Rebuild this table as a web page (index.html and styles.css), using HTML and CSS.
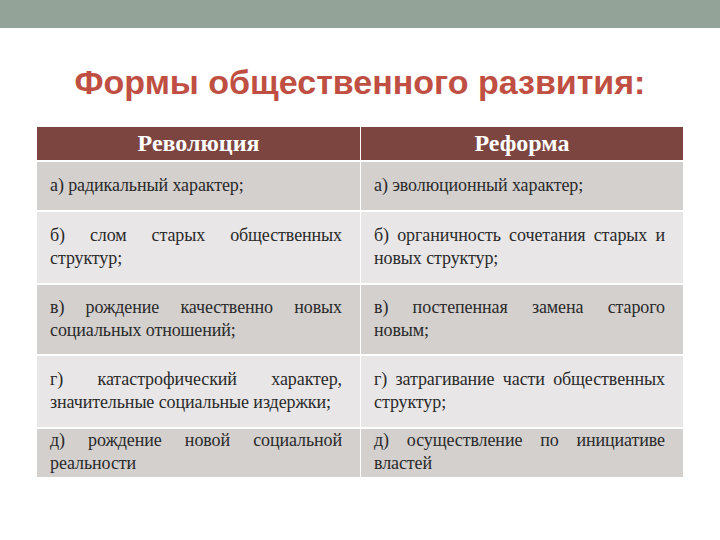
FILE: index.html
```html
<!DOCTYPE html>
<html lang="ru">
<head>
<meta charset="utf-8">
<title>slide</title>
<link rel="stylesheet" href="styles.css">
</head>
<body>
<div class="topbar"></div>
<div class="title">Формы общественного развития:</div>
<table class="forms">
  <colgroup><col class="c1"><col class="c2"></colgroup>
  <tr class="r0">
    <th class="head">Революция</th>
    <th class="head">Реформа</th>
  </tr>
  <tr class="r1 dark">
    <td>а) радикальный характер;</td>
    <td>а) эволюционный характер;</td>
  </tr>
  <tr class="r2 light">
    <td><span class="jl">б) слом старых общественных</span> структур;</td>
    <td><span class="jl">б) органичность сочетания старых и</span> новых структур;</td>
  </tr>
  <tr class="r3 dark">
    <td><span class="jl">в) рождение качественно новых</span> социальных отношений;</td>
    <td><span class="jl">в) постепенная замена старого</span> новым;</td>
  </tr>
  <tr class="r4 light">
    <td><span class="jl">г) катастрофический характер,</span> <span class="nw">значительные социальные издержки;</span></td>
    <td><span class="jl">г) затрагивание части общественных</span> структур;</td>
  </tr>
  <tr class="r5 dark">
    <td><span class="jl">д) рождение новой социальной</span> реальности</td>
    <td><span class="jl">д) осуществление по инициативе</span> властей</td>
  </tr>
</table>
</body>
</html>
```
FILE: styles.css
```css
body {
  margin: 0;
  background: #ffffff;
  font-family: "Liberation Serif", Tinos, "Times New Roman", serif;
}
.topbar {
  height: 28px;
  background: #94a397;
}
.title {
  margin: 34px 0 23px;
  font-family: "Liberation Sans", Arial, sans-serif;
  font-weight: bold;
  font-size: 34px;
  line-height: 40px;
  text-align: center;
  color: #bf4f42;
}
.forms {
  margin-left: 36px;
  border-collapse: separate;
  border-spacing: 1px 2px;
  table-layout: fixed;
  width: 648px;
}
.c1 { width: 323px; }
.c2 { width: 322px; }
.r0 { height: 33px; }
.r1 { height: 48px; }
.r2 { height: 71px; }
.r3 { height: 69px; }
.r4 { height: 71px; }
.r5 { height: 48px; }
.head {
  padding: 0;
  background: #7c4540;
  color: #ffffff;
  font-family: "Liberation Serif", Tinos, "Times New Roman", serif;
  font-weight: bold;
  font-size: 24px;
  text-align: center;
  vertical-align: middle;
}
.forms td {
  padding: 0 18px 2px 13px;
  font-family: "Liberation Serif", Tinos, "Times New Roman", serif;
  font-size: 18px;
  line-height: 23px;
  letter-spacing: -0.1px;
  color: #2a2a2a;
  text-align: left;
  vertical-align: middle;
}
.jl {
  display: block;
  white-space: nowrap;
  text-align: justify;
  text-align-last: justify;
}
.nw {
  white-space: nowrap;
}
.dark td {
  background: #d3d0ce;
}
.light td {
  background: #e8e6e7;
}
```
